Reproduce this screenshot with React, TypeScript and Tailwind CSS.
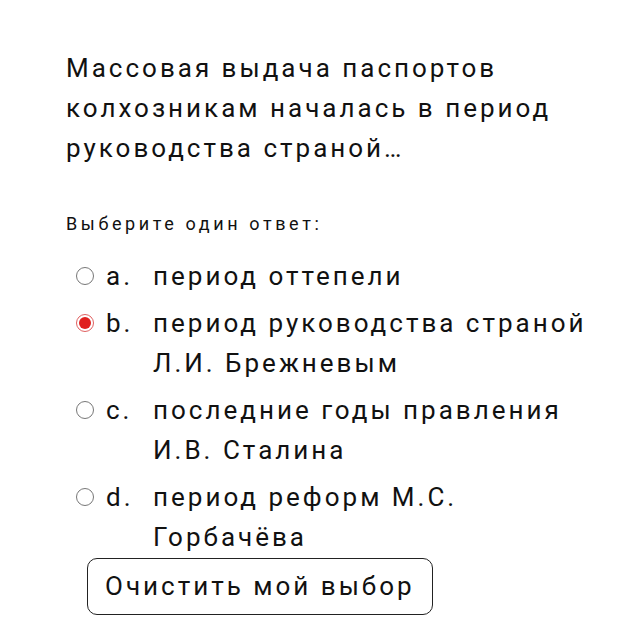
import React, { useState } from 'react';

const options = [
  { key: 'a', text: 'период оттепели' },
  { key: 'b', text: 'период руководства страной Л.И. Брежневым' },
  { key: 'c', text: 'последние годы правления И.В. Сталина' },
  { key: 'd', text: 'период реформ М.С. Горбачёва' },
];

const Radio: React.FC<{ checked: boolean }> = ({ checked }) =>
  checked ? (
    <span className="w-[18px] h-[18px] rounded-full border border-[#e06060] bg-white flex items-center justify-center">
      <span className="w-[12px] h-[12px] rounded-full bg-[#e0201e]" />
    </span>
  ) : (
    <span className="w-[18px] h-[18px] rounded-full border border-[#777] bg-white" />
  );

const App: React.FC = () => {
  const [selected, setSelected] = useState<string | null>('b');

  return (
    <div className="min-h-screen bg-white text-[#111] pl-[66px] pr-4 pt-[48px] font-['Roboto',sans-serif]">
      <p className="text-[26px] leading-[40px] tracking-[3px] w-[520px]">
        Массовая выдача паспортов колхозникам началась в период руководства страной…
      </p>
      <p className="mt-[44px] text-[18px] leading-[24px] tracking-[3.6px]">Выберите один ответ:</p>
      <div className="mt-[20px] flex flex-col gap-[7px]">
        {options.map((o) => (
          <div key={o.key} className="flex cursor-pointer" onClick={() => setSelected(o.key)}>
            <div className="w-[40px] pl-[10px] h-[40px] flex items-center">
              <Radio checked={selected === o.key} />
            </div>
            <span className="w-[47px] text-[26px] leading-[40px] tracking-[3px]">{o.key}.</span>
            <span className="w-[440px] text-[26px] leading-[40px] tracking-[3px]">{o.text}</span>
          </div>
        ))}
      </div>
      <button
        onClick={() => setSelected(null)}
        className="ml-[21px] mt-[1px] h-[57px] px-[17px] border border-[#222] rounded-[10px] text-[26px] tracking-[3px] bg-white"
      >
        Очистить мой выбор
      </button>
    </div>
  );
};

export default App;
